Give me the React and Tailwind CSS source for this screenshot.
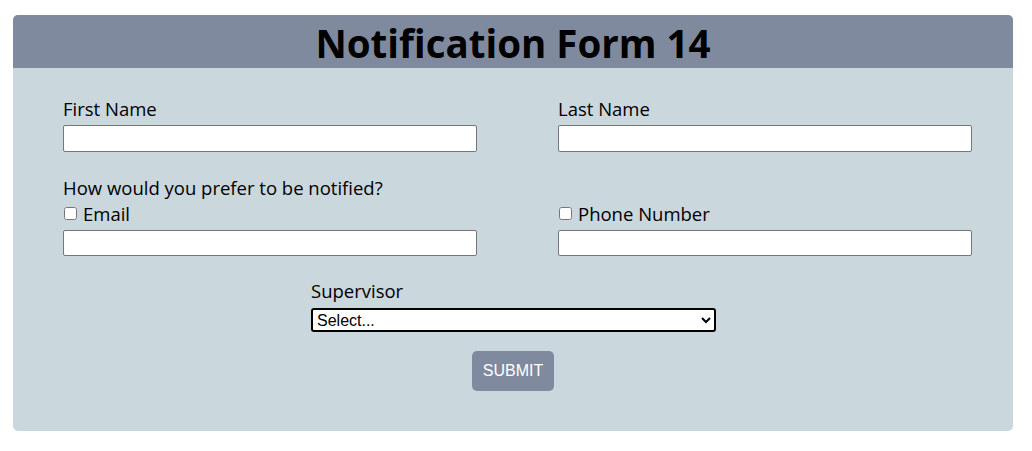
import React from 'react';

export default function App() {
  return (
    <div className="w-[1032px] h-[451px] bg-white pt-[15px] pl-[13px]" style={{ fontFamily: '"Open Sans", "Noto Sans", sans-serif' }}>
      <div className="w-[1000px] h-[416px] bg-[#cad7dc] rounded-[5px] overflow-hidden">
        {/* Header */}
        <div className="h-[53px] bg-[#808a9e] flex items-center justify-center pt-[3px]">
          <h1 className="text-[38.5px] font-bold text-black leading-none">Notification Form 14</h1>
        </div>

        <form className="px-[50px] pt-[28px] text-[18.5px] text-black">
          <div className="flex justify-between w-[909px]">
            <Field label="First Name" />
            <Field label="Last Name" />
          </div>

          <p className="mt-[23px] leading-[25px]">How would you prefer to be notified?</p>
          <div className="flex justify-between w-[909px]">
            <CheckField label="Email" />
            <CheckField label="Phone Number" />
          </div>

          <div className="mt-[22px] ml-[248px] w-[405px]">
            <label className="block leading-[25px]">Supervisor</label>
            <select className="mt-[5px] block w-[405px] h-[24px] bg-white border-2 border-black rounded-[3px] text-[16px] text-black" style={{ fontFamily: '"Liberation Sans", Arial, sans-serif' }}>
              <option>Select...</option>
            </select>
          </div>

          <div className="flex justify-center mt-[19px] w-[900px]">
            <button type="button" className="w-[82px] h-[40px] bg-[#808a9e] text-white text-[16px] rounded-[5px]" style={{ fontFamily: '"Liberation Sans", Arial, sans-serif' }}>
              SUBMIT
            </button>
          </div>
        </form>
      </div>
    </div>
  );
}

function Field({ label }) {
  return (
    <div className="w-[414px]">
      <label className="block leading-[25px]">{label}</label>
      <input type="text" className="mt-[4px] block w-[414px] h-[27px] bg-white border border-[#767676] rounded-[2px]" />
    </div>
  );
}

function CheckField({ label }) {
  return (
    <div className="w-[414px]">
      <label className="flex items-center leading-[25px] mt-[1px]">
        <input type="checkbox" className="w-[13px] h-[13px] mr-[6px] ml-[1px]" />
        {label}
      </label>
      <input type="text" className="mt-[4px] block w-[414px] h-[26px] bg-white border border-[#767676] rounded-[2px]" />
    </div>
  );
}
